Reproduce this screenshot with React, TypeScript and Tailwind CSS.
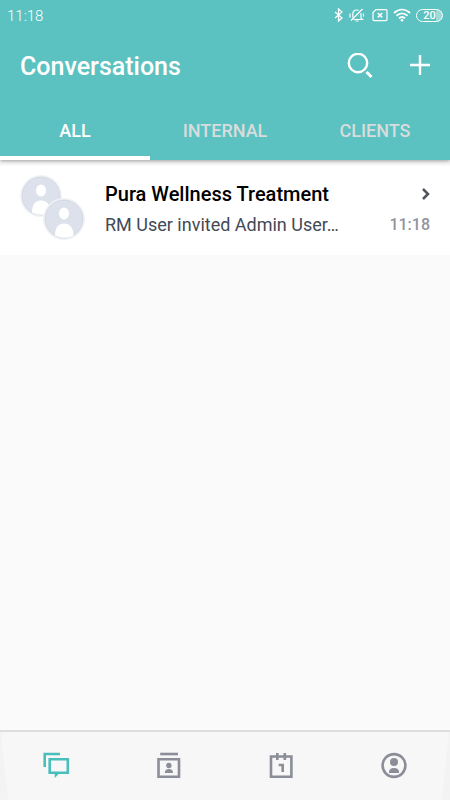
import type { ReactNode } from "react";
import clsx from "clsx";

type NavItem = {
  label: string;
  active?: boolean;
  icon: ReactNode;
};

const tabs = ["ALL", "INTERNAL", "CLIENTS"];

const navItems: NavItem[] = [
  {
    label: "Conversations",
    active: true,
    icon: (
      <>
        <path d="M2.700 15V2H18" />
        <path d="M7.700 7.200h18.100v13.500H7.700z" />
        <path d="M12.700 21h5l-5 5z" fill="currentColor" stroke="none" />
      </>
    ),
  },
  {
    label: "Contacts",
    icon: (
      <>
        <path d="M5.200 2h17.800" />
        <path d="M3.500 7.200h20.500v17.600H3.500z" />
        <circle cx="13.900" cy="13.500" r="2.700" fill="currentColor" stroke="none" />
        <path d="M9.900 21v-1c0-2 2-3 4-3s4 1 4 3v1z" fill="currentColor" stroke="none" />
      </>
    ),
  },
  {
    label: "Calendar",
    icon: (
      <>
        <path d="M4 4.500h20.400v20.300H4z" />
        <path d="M10.300 1v7M17.800 1v7" />
        <path d="M11.700 13h4v7" />
      </>
    ),
  },
  {
    label: "Profile",
    icon: (
      <>
        <circle cx="14" cy="13.500" r="11.400" />
        <circle cx="14" cy="10" r="4" fill="currentColor" stroke="none" />
        <path d="M9 21v-1c0-2.500 2-4 5-4s5 1.500 5 4v1z" fill="currentColor" stroke="none" />
      </>
    ),
  },
];

const StatusBar = () => (
  <div className="flex h-[30px] items-center justify-between px-[7px]">
    <span className="pt-px text-[15px] leading-5 font-light">11:18</span>
    <div className="flex items-center">
      <svg width="10" height="14" viewBox="0 0 10 14" fill="none" stroke="currentColor" strokeWidth="1.300">
        <path d="M1 4l7 6-3.500 3V1L8 4l-7 6" />
      </svg>
      <svg className="ml-[5px]" width="16" height="14" viewBox="0 0 16 14" fill="none" stroke="currentColor" strokeWidth="1.200">
        <path d="M9.500 2.300C5.500 1.200 3.800 3.500 3.800 6v3.500M12 5v5l1.500 1.500H4.500M6.500 13h3M13.500 1L2 12.500M1 5.500v4M14.500 5.500v3" />
      </svg>
      <svg className="ml-[7px]" width="16" height="14" viewBox="0 0 16 14" fill="none" stroke="currentColor" strokeWidth="1.200">
        <path d="M4 1.600h10a1 1 0 0 1 1 1v9a1 1 0 0 1-1 1H2a1 1 0 0 1-1-1V4.600z" />
        <path d="M5.800 5l4.400 4.400M10.200 5L5.800 9.400" strokeWidth="1.500" />
      </svg>
      <svg className="ml-[5px]" width="18" height="14" viewBox="0 0 18 14" fill="none" stroke="currentColor" strokeWidth="1.800">
        <path d="M1 5c5-4.500 11-4.500 16 0M3.500 7.700c3.500-3 7.500-3 11 0M6 10.300c2-1.700 4-1.700 6 0" />
        <circle cx="9" cy="12.300" r="1.300" fill="currentColor" stroke="none" />
      </svg>
      <span className="ml-[5px] flex h-[13px] w-[27px] items-center justify-center rounded-full border border-white bg-linear-to-r from-transparent from-75% to-white/40 to-75% text-[11px] leading-none font-medium">
        20
      </span>
    </div>
  </div>
);

const Header = () => (
  <header className="relative z-10 bg-[#5bc2c1] text-white shadow-[0_1px_4px_rgba(0,0,0,0.4)]">
    <StatusBar />
    <div className="flex h-[72px] items-center justify-between px-5">
      <h1 className="pt-px text-[25px] leading-8 font-medium">Conversations</h1>
      <div className="flex items-center gap-9">
        <button type="button" aria-label="Search">
          <svg width="27" height="26" viewBox="0 0 27 26" fill="none" stroke="currentColor" strokeWidth="2.400">
            <circle cx="11" cy="10" r="9.200" />
            <path d="M19.500 19l5 5" strokeWidth="3" />
          </svg>
        </button>
        <button type="button" aria-label="New conversation">
          <svg width="20" height="26" viewBox="0 0 20 26" fill="none" stroke="currentColor" strokeWidth="2.400">
            <path d="M10 2v20M0 12h20" />
          </svg>
        </button>
      </div>
    </div>
    <div role="tablist" className="grid h-[58px] grid-cols-3">
      {tabs.map((tab, index) => (
        <button
          key={tab}
          type="button"
          role="tab"
          aria-selected={index === 0}
          className={clsx(
            "border-b-4 pt-1 text-[18px] leading-6 font-medium",
            index === 0 ? "border-white text-white" : "border-transparent text-[#d9dcdc]"
          )}
        >
          {tab}
        </button>
      ))}
    </div>
  </header>
);

const Avatar = ({ className }: { className?: string }) => (
  <svg className={className} width="42" height="42" viewBox="0 0 42 42">
    <circle cx="21" cy="21" r="21" fill="#f1f3f6" />
    <circle cx="21" cy="21" r="19" fill="#dce1eb" stroke="#c8ced6" strokeWidth="0.600" />
    <ellipse cx="21" cy="15.500" rx="5" ry="6" fill="#fff" />
    <path d="M12 37.500C12 29.500 15.500 25.500 21 25.500S30.500 29.500 30.500 37.500C25.500 40.500 17.500 40.500 12 37.500z" fill="#fff" />
  </svg>
);

const ConversationRow = () => (
  <a href="#conversation" className="flex h-[89px] bg-white px-5">
    <div className="relative mt-[9px] h-[65px] w-[65px] shrink-0">
      <Avatar className="absolute top-0 left-0" />
      <Avatar className="absolute right-0 bottom-0" />
    </div>
    <div className="ml-5 flex min-w-0 flex-1 flex-col pt-[13px]">
      <div className="flex items-center justify-between">
        <h2 className="truncate text-[20px] leading-[30px] font-medium text-black">Pura Wellness Treatment</h2>
        <svg className="shrink-0" width="9" height="14" viewBox="0 0 9 14" fill="none" stroke="#50545d" strokeWidth="2.500">
          <path d="M2 2l5 5-5 5" />
        </svg>
      </div>
      <div className="flex items-center justify-between">
        <p className="truncate text-[18px] leading-8 text-[#434956]">RM User invited Admin User…</p>
        <time className="text-[16px] leading-8 font-medium text-[#9094a0]">11:18</time>
      </div>
    </div>
  </a>
);

const BottomNav = () => (
  <nav className="relative grid h-[70px] grid-cols-4 border-t-2 border-[#dedede] bg-[#f7f7f7]">
    <svg className="absolute top-0 left-0" width="8" height="68" viewBox="0 0 8 68" fill="#f3f3f3">
      <path d="M0 0h1l7 68H0z" />
    </svg>
    <svg className="absolute top-0 right-0" width="8" height="68" viewBox="0 0 8 68" fill="#f3f3f3">
      <path d="M8 0H7L0 68h8z" />
    </svg>
    {navItems.map(({ label, active, icon }) => (
      <button
        key={label}
        type="button"
        aria-label={label}
        className={clsx("flex items-center justify-center", active ? "text-[#48bfbd]" : "text-[#8b8e98]")}
      >
        <svg width="28" height="28" viewBox="0 0 28 28" fill="none" stroke="currentColor" strokeWidth="2.600">
          {icon}
        </svg>
      </button>
    ))}
  </nav>
);

const App = () => (
  <div className="flex min-h-screen flex-col bg-[#fafafa] font-['Roboto',sans-serif]">
    <Header />
    <main className="flex-1 pt-[6px]">
      <ConversationRow />
    </main>
    <BottomNav />
  </div>
);

export default App;
